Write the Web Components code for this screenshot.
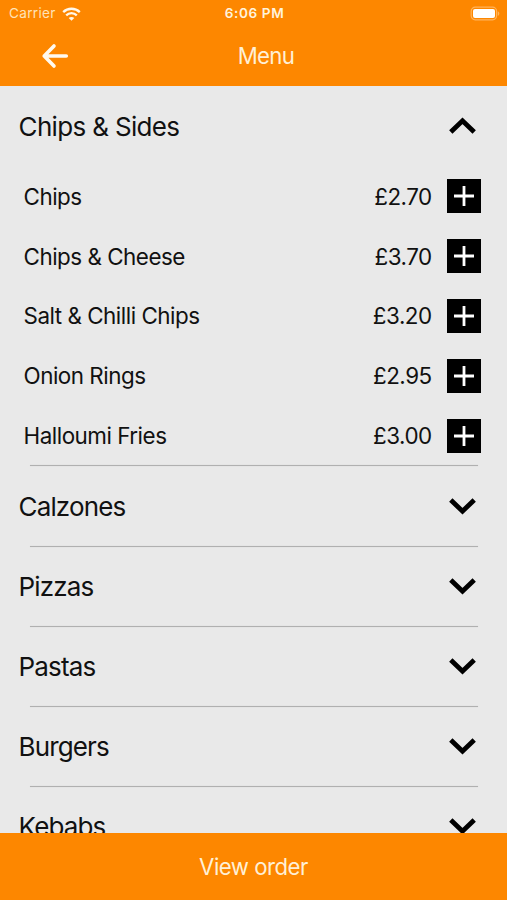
<!DOCTYPE html>
<html lang="en">
<head>
<meta charset="utf-8">
<title>Menu</title>
<style>
html, body { margin: 0; height: 100%; }
body { font-family: Inter, "Liberation Sans", sans-serif; color: #111; background: #e9e9e9; overflow: hidden; }
</style>
</head>
<body>
<menu-screen></menu-screen>
<script>
const define = (name, html) => customElements.define(name, class extends HTMLElement {
  constructor() {
    super();
    this.attachShadow({ mode: "open" }).innerHTML = html;
  }
});

define("status-bar", `
<style>
:host { display: grid; grid-template-columns: 1fr auto 1fr; align-items: center; height: 27px; padding: 0 7px 0 9px; box-sizing: border-box; color: #fff3dc; font-size: 13.6px; line-height: 27px; }
.left { display: flex; align-items: center; gap: 6px; }
.carrier { color: #ffe3b8; letter-spacing: .3px; }
.time { font-weight: 600; letter-spacing: .6px; }
.battery { justify-self: end; }
svg { display: block; }
</style>
<div class="left"><span class="carrier">Carrier</span>
<svg width="19" height="14" viewBox="0 0 19 14" fill="none" stroke="#fff8ea" stroke-width="2.3"><path d="M1.2 5.1C5.8.6 13.2.6 17.8 5.1"/><path d="M4.2 8.3C7.2 5.4 11.8 5.4 14.8 8.3"/><path d="M9.5 13.8L6.7 11C8.3 9.6 10.7 9.6 12.3 11Z" fill="#fff8ea" stroke="none"/></svg></div>
<span class="time">6:06 PM</span>
<svg class="battery" width="30" height="15" viewBox="0 0 30 15"><rect x="1.2" y="1.2" width="25.4" height="12.6" rx="4" fill="none" stroke="#ffb45c" stroke-width="1.2"/><rect x="3" y="3" width="22" height="9" rx="2" fill="#fff"/><path d="M27.8 5.2c2 .8 2 3.8 0 4.6z" fill="#ffb45c"/></svg>`);

define("nav-bar", `
<style>
:host { display: grid; grid-template-columns: 1fr auto 1fr; align-items: center; height: 59px; padding: 0 41px; color: #fff0d6; font-size: 22.2px; line-height: 57px; }
.title { letter-spacing: -.7px; padding-left: 25px; margin: 0 -12px; }
:host { box-sizing: border-box; padding-bottom: 2px; }
svg { display: block; }
</style>
<svg width="28" height="26" viewBox="0 0 28 26" fill="none" stroke="#fffaf0" stroke-width="3.6" stroke-linecap="round" stroke-linejoin="round"><path d="M13 3L3.2 13L13 23M3.2 13H25.3"/></svg>
<span class="title"><slot></slot></span><span></span>`);

define("menu-section", `
<style>
:host { display: block; }
.head { display: flex; justify-content: space-between; align-items: center; height: 79.1px; padding: 0 30px 0 18.6px; font-size: 26px; letter-spacing: -.87px; }
:host([open]) .head { height: 80.5px; letter-spacing: -.67px; }
svg { display: block; }
:host([open]) svg { transform: rotate(180deg); }
.line { height: 1px; margin: 0 29px 0 30px; background: #b0b0b0; box-shadow: 0 0 .8px #b0b0b0; }
</style>
<div class="head"><slot name="title"></slot><svg width="29" height="20" viewBox="0 0 29 20" fill="none" stroke="#000" stroke-width="4.8"><path d="M2.8 4L14.5 15.2L26.2 4"/></svg></div>
<slot></slot>
<div class="line"></div>`);

define("menu-item", `
<style>
:host { display: flex; align-items: center; height: 59.8px; padding: 0 26px 0 23.5px; font-size: 22.4px; letter-spacing: -.48px; }
.name { flex: 1; }
svg { display: block; margin-left: 15.3px; }
</style>
<span class="name"><slot></slot></span><slot name="price"></slot>
<svg width="34" height="34" viewBox="0 0 34 34"><path fill="#000" d="M0 0h34v34H0z"/><path d="M17 7v20M7 17h20" stroke="#fff" stroke-width="2.8"/></svg>`);

define("order-bar", `
<style>
:host { display: flex; justify-content: center; align-items: center; height: 67px; background: #fd8700; color: #fff0d6; font-size: 22.2px; letter-spacing: -.5px; }
</style>
<slot></slot>`);

define("menu-screen", `
<style>
:host { display: flex; flex-direction: column; height: 900px; background: #e9e9e9; }
header { background: #fd8700; flex: none; }
main { flex: 1; min-height: 0; overflow: hidden; }
order-bar { flex: none; }
</style>
<header><status-bar></status-bar><nav-bar>Menu</nav-bar></header>
<main>
<menu-section open><span slot="title">Chips &amp; Sides</span>
<menu-item>Chips<span slot="price">£2.70</span></menu-item>
<menu-item>Chips &amp; Cheese<span slot="price">£3.70</span></menu-item>
<menu-item>Salt &amp; Chilli Chips<span slot="price">£3.20</span></menu-item>
<menu-item>Onion Rings<span slot="price">£2.95</span></menu-item>
<menu-item>Halloumi Fries<span slot="price">£3.00</span></menu-item>
</menu-section>
<menu-section><span slot="title">Calzones</span></menu-section>
<menu-section><span slot="title">Pizzas</span></menu-section>
<menu-section><span slot="title">Pastas</span></menu-section>
<menu-section><span slot="title">Burgers</span></menu-section>
<menu-section><span slot="title">Kebabs</span></menu-section>
</main>
<order-bar>View order</order-bar>`);
</script>
</body>
</html>
